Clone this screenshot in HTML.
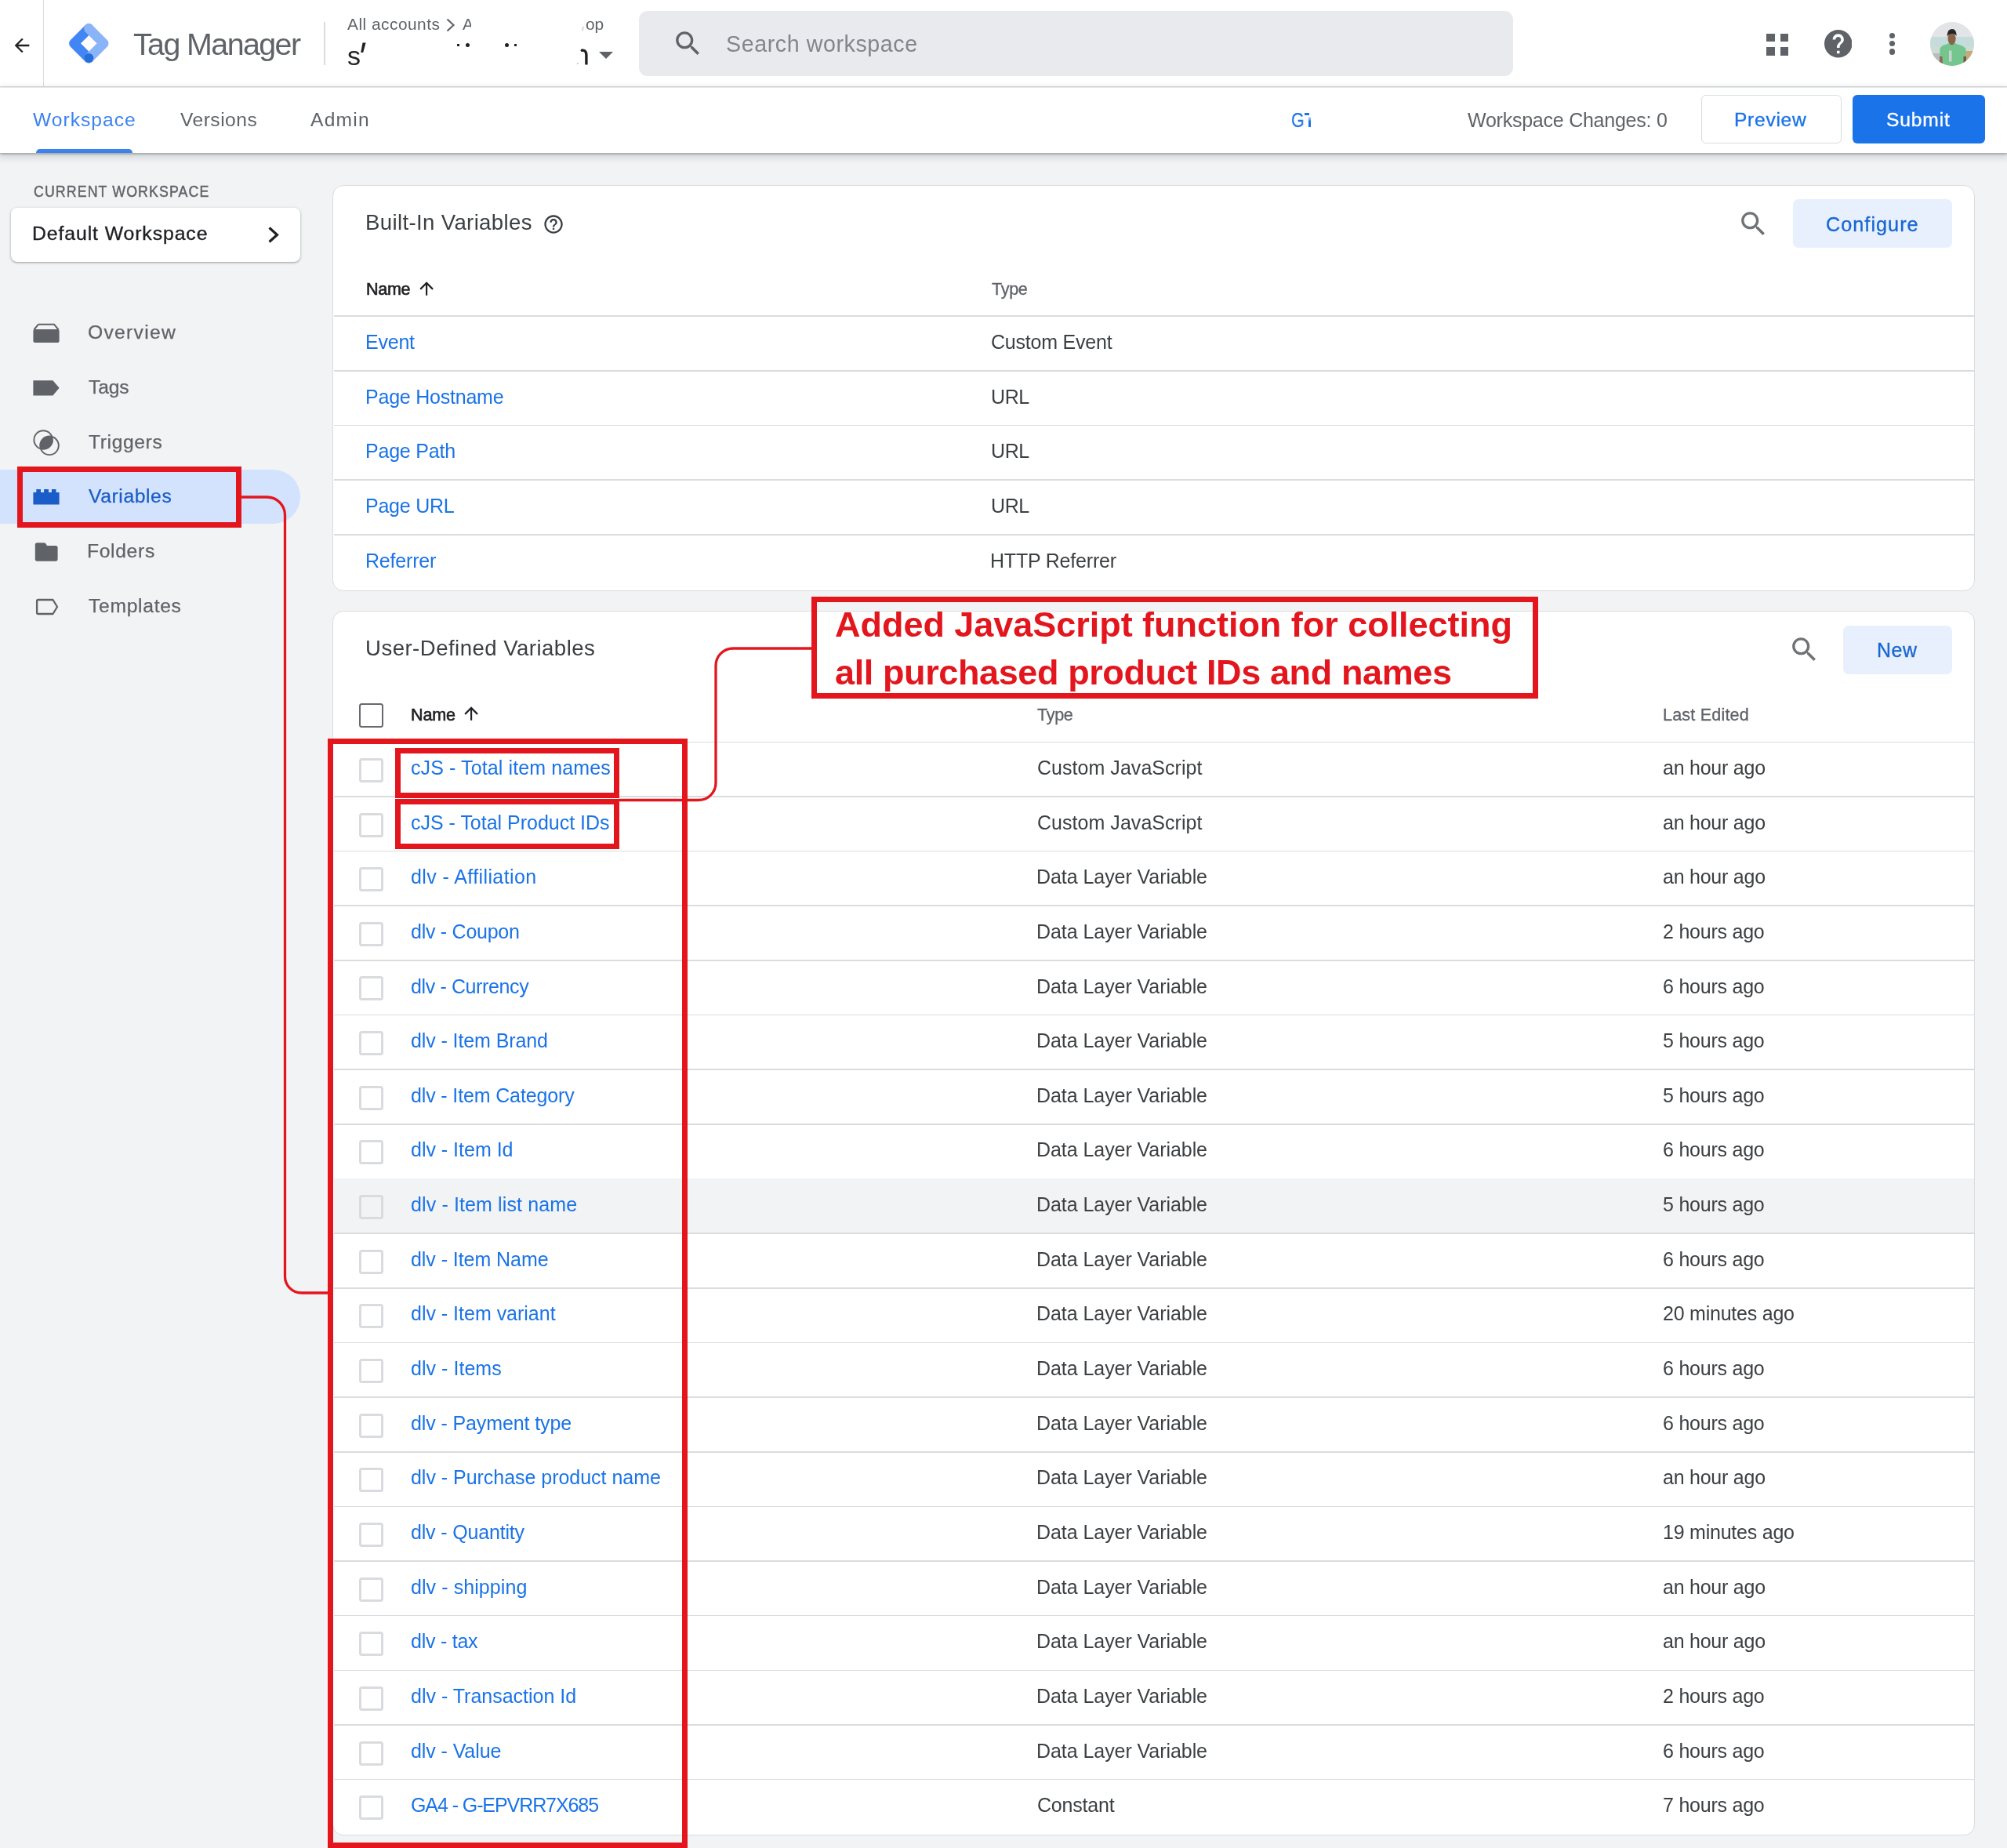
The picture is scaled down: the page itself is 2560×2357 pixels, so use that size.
<!DOCTYPE html>
<html><head><meta charset="utf-8">
<style>
html,body{margin:0;padding:0;}
body{width:2560px;height:2357px;position:relative;overflow:hidden;background:#f1f3f4;font-family:"Liberation Sans",sans-serif;}
.t{position:absolute;white-space:nowrap;will-change:transform;}
</style></head><body>
<div style="position:absolute;left:0.0px;top:0.0px;width:2560.0px;height:110.0px;background:#fff"></div>
<div style="position:absolute;left:0.0px;top:110.0px;width:2560.0px;height:1.3px;background:#dadce0"></div>
<div style="position:absolute;left:54.5px;top:0.0px;width:1.5px;height:110.0px;background:#dadce0"></div>
<svg style="position:absolute;left:14.0px;top:43.9px;" width="28.0" height="28.0" viewBox="0 0 24 24"><path fill="#202124" d="M20 11H7.83l5.59-5.59L12 4l-8 8 8 8 1.41-1.41L7.83 13H20v-2z"/></svg>
<svg style="position:absolute;left:80.0px;top:20.0px;" width="70.0" height="70.0" viewBox="80 20 70 70"><path d="M113.3 36.3 L94.3 55.3 L113.3 74.3" fill="none" stroke="#4285f4" stroke-width="12.4" stroke-linecap="round" stroke-linejoin="round"/><path d="M113.3 36.3 L132.3 55.3 L113.3 74.3" fill="none" stroke="#8ab4f8" stroke-width="12.4" stroke-linecap="round" stroke-linejoin="round"/><circle cx="113.3" cy="74.0" r="6.1000000000000005" fill="#246fdb"/></svg>
<div class="t" style="left:169.8px;top:36.6px;font-size:39.4px;line-height:39.4px;color:#5f6368;font-weight:400;letter-spacing:-1.59px;">Tag Manager</div>
<div style="position:absolute;left:413.0px;top:28.0px;width:1.5px;height:55.0px;background:#dadce0"></div>
<div class="t" style="left:442.5px;top:21.4px;font-size:20.9px;line-height:20.9px;color:#5f6368;font-weight:400;letter-spacing:0.48px;">All accounts</div>
<svg style="position:absolute;left:566.0px;top:22.0px;" width="18.0" height="20.0" viewBox="0 0 18 20"><path d="M4.5 2.5 L12.5 10 L4.5 17.5" fill="none" stroke="#5f6368" stroke-width="2.2"/></svg>
<div class="t" style="left:589.5px;top:21.4px;font-size:20.9px;line-height:20.9px;color:#5f6368;font-weight:400;letter-spacing:0.00px;">A</div>
<div style="position:absolute;left:601.0px;top:18.0px;width:140.0px;height:26.0px;background:#fff"></div>
<div class="t" style="left:747.0px;top:21.4px;font-size:20.9px;line-height:20.9px;color:#5f6368;font-weight:400;letter-spacing:-0.02px;">op</div>
<div style="position:absolute;left:743.3px;top:33.5px;width:0.9px;height:5.0px;background:#aaa;transform:skewX(-15deg)"></div>
<div class="t" style="left:442.5px;top:53.9px;font-size:34px;line-height:34px;color:#202124;font-weight:400;letter-spacing:0.00px;">s</div>
<svg style="position:absolute;left:458.0px;top:54.0px;" width="10.0" height="14.0" viewBox="0 0 10 14"><path d="M4.5 0.5 H8.6 L5.2 13 H2.2z" fill="#202124"/></svg>
<div style="position:absolute;left:583.0px;top:56.0px;width:3.0px;height:2.5px;background:#202124"></div>
<div style="position:absolute;left:594.0px;top:55.0px;width:5.0px;height:5.0px;background:#202124;border-radius:50%"></div>
<div style="position:absolute;left:644.0px;top:55.0px;width:5.0px;height:5.0px;background:#202124;border-radius:50%"></div>
<div style="position:absolute;left:656.0px;top:56.0px;width:3.0px;height:2.5px;background:#202124"></div>
<svg style="position:absolute;left:734.0px;top:60.0px;" width="18.0" height="24.0" viewBox="734 60 18 24"><path d="M742.2 64.2 Q747.9 63.6 747.9 70.5 V82.6" fill="none" stroke="#202124" stroke-width="3.4" stroke-linecap="butt"/><circle cx="742.3" cy="64.3" r="1.7" fill="#202124"/><path d="M736 82 L737.5 80.2" stroke="#999" stroke-width="1"/></svg>
<svg style="position:absolute;left:764.0px;top:66.0px;" width="18.0" height="9.0" viewBox="0 0 18 9"><path d="M0 0 L18 0 L9 9z" fill="#5f6368"/></svg>
<div style="position:absolute;left:815.0px;top:13.7px;width:1115.0px;height:83.5px;background:#e9eaed;border-radius:11px"></div>
<svg style="position:absolute;left:856.8px;top:35.2px;" width="41.0" height="41.0" viewBox="0 0 24 24"><path fill="#5f6368" d="M15.5 14h-.79l-.28-.27C15.41 12.59 16 11.11 16 9.5 16 5.91 13.09 3 9.5 3S3 5.91 3 9.5 5.91 16 9.5 16c1.61 0 3.090-.59 4.23-1.57l.27.28v.79l5 4.99L20.49 19l-4.99-5zm-6 0C7.01 14 5 11.99 5 9.5S7.01 5 9.5 5 14 7.01 14 9.5 11.99 14 9.5 14z"/></svg>
<div class="t" style="left:926.0px;top:41.7px;font-size:28.6px;line-height:28.6px;color:#80868b;font-weight:400;letter-spacing:0.59px;">Search workspace</div>
<div style="position:absolute;left:2253.4px;top:42.7px;width:10.6px;height:10.5px;background:#5f6368"></div>
<div style="position:absolute;left:2270.8px;top:42.7px;width:10.6px;height:10.5px;background:#5f6368"></div>
<div style="position:absolute;left:2253.4px;top:60.2px;width:10.6px;height:10.5px;background:#5f6368"></div>
<div style="position:absolute;left:2270.8px;top:60.2px;width:10.6px;height:10.5px;background:#5f6368"></div>
<svg style="position:absolute;left:2326.5px;top:38.0px;" width="35.5" height="35.5" viewBox="0 0 24 24"><path fill="#5f6368" d="M12 2C6.48 2 2 6.48 2 12s4.48 10 10 10 10-4.48 10-10S17.52 2 12 2zm1 17h-2v-2h2v2zm2.07-7.75l-.9.92C13.45 12.9 13 13.5 13 15h-2v-.5c0-1.1.45-2.1 1.17-2.83l1.24-1.26c.37-.36.59-.86.59-1.41 0-1.1-.9-2-2-2s-2 .9-2 2H8c0-2.21 1.79-4 4-4s4 1.79 4 4c0 .88-.36 1.68-.93 2.25z" transform="translate(-2.4 -2.4) scale(1.2)"/></svg>
<div style="position:absolute;left:2410.2px;top:41.7px;width:7.2px;height:7.2px;background:#5f6368;border-radius:50%"></div>
<div style="position:absolute;left:2410.2px;top:52.0px;width:7.2px;height:7.2px;background:#5f6368;border-radius:50%"></div>
<div style="position:absolute;left:2410.2px;top:62.4px;width:7.2px;height:7.2px;background:#5f6368;border-radius:50%"></div>
<svg style="position:absolute;left:2462.0px;top:28.0px;" width="56.0" height="56.0" viewBox="0 0 56 56"><defs><clipPath id="av"><circle cx="28" cy="28" r="28"/></clipPath></defs><g clip-path="url(#av)"><rect width="56" height="56" fill="#e3e4e5"/><rect y="19" width="56" height="13" fill="#c6dcdc"/><rect y="32" width="56" height="24" fill="#cfdcd2"/><rect x="45" y="37" width="11" height="19" fill="#c9a97a"/><rect x="2" y="40" width="10" height="16" fill="#b9bcbd"/><path d="M11.5 58 L12.5 34 Q14 30 20 28.8 L24 27 Q27.6 29.5 31.5 27 L35.5 28.8 Q42 30 45.5 34 L46.5 58z" fill="#74c68e"/><path d="M12 44 L15.5 44 L16 56 L12 56z" fill="#8f6a4e"/><path d="M42.5 44 L46 44 L46 56 L42.5 56z" fill="#6e5a48"/><rect x="24" y="36.5" width="3.5" height="14" fill="#c9d2cc"/><ellipse cx="27.6" cy="21.5" rx="5" ry="7.8" fill="#8a6248"/><path d="M21.8 19 Q21.3 9 27.8 9 Q34 9 33.6 18.5 Q32.5 15 28 15 Q23.5 15 21.8 19z" fill="#262626"/></g></svg>
<div style="position:absolute;left:0.0px;top:111.5px;width:2560.0px;height:83.5px;background:#fff;box-shadow:0 1.5px 2px rgba(60,64,67,.28),0 3px 9px 2px rgba(60,64,67,.2)"></div>
<div class="t" style="left:42.3px;top:141.0px;font-size:24.6px;line-height:24.6px;color:#3b82f0;font-weight:400;letter-spacing:1.01px;">Workspace</div>
<div style="position:absolute;left:45.7px;top:189.6px;width:123.0px;height:5.4px;background:#3b82ee;border-radius:5px 5px 0 0"></div>
<div class="t" style="left:229.6px;top:141.0px;font-size:24.6px;line-height:24.6px;color:#5f6368;font-weight:400;letter-spacing:0.48px;">Versions</div>
<div class="t" style="left:395.5px;top:141.0px;font-size:24.6px;line-height:24.6px;color:#5f6368;font-weight:400;letter-spacing:1.24px;">Admin</div>
<div class="t" style="left:1646.7px;top:139.9px;font-size:26.4px;line-height:26.4px;color:#1a73e8;font-weight:400;letter-spacing:0.00px;-webkit-text-stroke:0.25px #1a73e8;transform:scaleX(0.81);transform-origin:0 0">G</div>
<div style="position:absolute;left:1664.0px;top:144.4px;width:6.0px;height:2.3px;background:#1a73e8"></div>
<div style="position:absolute;left:1669.3px;top:149.0px;width:2.9px;height:13.2px;background:linear-gradient(#d6e6fb,#1a73e8 45%)"></div>
<div class="t" style="left:1871.9px;top:140.9px;font-size:25px;line-height:25px;color:#5f6368;font-weight:400;letter-spacing:-0.24px;">Workspace Changes: 0</div>
<div style="position:absolute;left:2170.0px;top:121.0px;width:179.0px;height:62.0px;background:#fff;border:1.5px solid #dadce0;border-radius:6px;box-sizing:border-box"></div>
<div class="t" style="left:2212.4px;top:141.1px;font-size:24.6px;line-height:24.6px;color:#1a73e8;font-weight:400;letter-spacing:0.71px;-webkit-text-stroke:0.35px #1a73e8">Preview</div>
<div style="position:absolute;left:2363.0px;top:121.0px;width:169.0px;height:62.0px;background:#1a73e8;border-radius:6px"></div>
<div class="t" style="left:2406.2px;top:141.1px;font-size:24.6px;line-height:24.6px;color:#fff;font-weight:400;letter-spacing:0.86px;-webkit-text-stroke:0.35px #fff">Submit</div>
<div class="t" style="left:42.6px;top:236.9px;font-size:17.8px;line-height:17.8px;color:#5f6368;font-weight:400;letter-spacing:1.09px;-webkit-text-stroke:0.4px #5f6368;transform:scaleY(1.1);transform-origin:0 85%">CURRENT WORKSPACE</div>
<div style="position:absolute;left:14.0px;top:264.8px;width:369.0px;height:69.5px;background:#fff;border-radius:8px;box-shadow:0 1px 2px rgba(60,64,67,.3),0 1px 3px 1px rgba(60,64,67,.15)"></div>
<div class="t" style="left:40.6px;top:286.2px;font-size:24.8px;line-height:24.8px;color:#202124;font-weight:400;letter-spacing:0.90px;-webkit-text-stroke:0.35px #202124">Default Workspace</div>
<svg style="position:absolute;left:338.0px;top:287.0px;" width="22.0" height="25.0" viewBox="0 0 22 25"><path d="M5.5 3.5 L15.5 12.5 L5.5 21.5" fill="none" stroke="#202124" stroke-width="3.2"/></svg>
<div style="position:absolute;left:0.0px;top:599.0px;width:383.0px;height:69.0px;background:#d3e3fd;border-radius:0 34.5px 34.5px 0"></div>
<div class="t" style="left:111.5px;top:412.4px;font-size:24.7px;line-height:24.7px;color:#5f6368;font-weight:400;letter-spacing:1.28px;-webkit-text-stroke:0.25px #5f6368">Overview</div>
<div class="t" style="left:112.5px;top:482.0px;font-size:24.7px;line-height:24.7px;color:#5f6368;font-weight:400;letter-spacing:-0.20px;-webkit-text-stroke:0.25px #5f6368">Tags</div>
<div class="t" style="left:112.5px;top:551.7px;font-size:24.7px;line-height:24.7px;color:#5f6368;font-weight:400;letter-spacing:0.59px;-webkit-text-stroke:0.25px #5f6368">Triggers</div>
<div class="t" style="left:112.5px;top:621.4px;font-size:24.7px;line-height:24.7px;color:#1a5cc8;font-weight:400;letter-spacing:0.58px;-webkit-text-stroke:0.25px #1a5cc8">Variables</div>
<div class="t" style="left:110.5px;top:691.1px;font-size:24.7px;line-height:24.7px;color:#5f6368;font-weight:400;letter-spacing:0.65px;-webkit-text-stroke:0.25px #5f6368">Folders</div>
<div class="t" style="left:112.5px;top:760.8px;font-size:24.7px;line-height:24.7px;color:#5f6368;font-weight:400;letter-spacing:0.68px;-webkit-text-stroke:0.25px #5f6368">Templates</div>
<svg style="position:absolute;left:42.0px;top:412.0px;" width="34.0" height="26.0" viewBox="0 0 34 26"><path d="M7 1.7 L27 1.7 L32.6 8.5" fill="none" stroke="#5f6368" stroke-width="2"/><path d="M7 1.7 L1.4 8.5" fill="none" stroke="#5f6368" stroke-width="2"/><rect x="0.4" y="8" width="33.2" height="17" rx="2" fill="#5f6368"/></svg>
<svg style="position:absolute;left:42.0px;top:485.0px;" width="34.0" height="20.0" viewBox="0 0 34 20"><path d="M0.4 0.2 L25.4 0.2 L33.6 9.8 L25.4 19.4 L0.4 19.4z" fill="#5f6368"/></svg>
<svg style="position:absolute;left:42.0px;top:547.0px;" width="35.0" height="35.0" viewBox="42 547 35 35"><circle cx="55.2" cy="561" r="11.8" fill="none" stroke="#5f6368" stroke-width="1.9"/><circle cx="63" cy="568.3" r="11.8" fill="none" stroke="#5f6368" stroke-width="1.9"/><clipPath id="c1"><circle cx="55.2" cy="561" r="11.8"/></clipPath><circle cx="63" cy="568.3" r="11.8" fill="#5f6368" clip-path="url(#c1)"/></svg>
<svg style="position:absolute;left:42.0px;top:623.0px;" width="34.0" height="21.0" viewBox="0 0 34 21"><path d="M0.4 5 H4.3 V0.9 H10 V5 H14.1 V0.9 H20 V5 H23.9 V0.9 H29.5 V5 H33.6 V20.4 H0.4z" fill="#1a5cc8"/></svg>
<svg style="position:absolute;left:44.0px;top:692.0px;" width="30.0" height="24.0" viewBox="0 0 30 24"><path d="M3.3 0.3 H12 Q13.5 0.3 14.3 1.3 L16 4 H27 Q29.6 4 29.6 6.5 V21 Q29.6 23.8 27 23.8 H3.3 Q0.8 23.8 0.8 21 V3 Q0.8 0.3 3.3 0.3z" fill="#5f6368"/></svg>
<svg style="position:absolute;left:45.0px;top:763.0px;" width="30.0" height="22.0" viewBox="0 0 30 22"><path d="M3.5 2 H22.5 L28 11 L22.5 20 H3.5 Q2.1 20 2.1 18.6 V3.4 Q2.1 2 3.5 2z" fill="none" stroke="#5f6368" stroke-width="2.3" stroke-linejoin="round"/></svg>
<div style="position:absolute;left:424.0px;top:236.0px;width:2095.0px;height:518.0px;background:#fff;border:1.5px solid #dadce0;border-radius:14px;box-sizing:border-box"></div>
<div class="t" style="left:465.8px;top:270.1px;font-size:27.6px;line-height:27.6px;color:#3c4043;font-weight:400;letter-spacing:0.35px;">Built-In Variables</div>
<svg style="position:absolute;left:691.5px;top:272.2px;" width="28.1" height="28.1" viewBox="0 0 24 24"><path fill="#3c4043" d="M11 18h2v-2h-2v2zm1-16C6.48 2 2 6.48 2 12s4.48 10 10 10 10-4.48 10-10S17.52 2 12 2zm0 18c-4.41 0-8-3.59-8-8s3.59-8 8-8 8 3.59 8 8-3.59 8-8 8zm0-14c-2.21 0-4 1.79-4 4h2c0-1.1.9-2 2-2s2 .9 2 2c0 2-3 1.75-3 5h2c0-2.25 3-2.5 3-5 0-2.21-1.79-4-4-4z"/></svg>
<svg style="position:absolute;left:2216.4px;top:264.9px;" width="41.0" height="41.0" viewBox="0 0 24 24"><path fill="#6f7378" d="M15.5 14h-.79l-.28-.27C15.41 12.59 16 11.11 16 9.5 16 5.91 13.09 3 9.5 3S3 5.91 3 9.5 5.91 16 9.5 16c1.61 0 3.09-.59 4.23-1.57l.27.28v.79l5 4.99L20.49 19l-4.99-5zm-6 0C7.01 14 5 11.99 5 9.5S7.01 5 9.5 5 14 7.01 14 9.5 11.99 14 9.5 14z"/></svg>
<div style="position:absolute;left:2287.0px;top:254.0px;width:203.0px;height:62.0px;background:#e8f0fe;border-radius:7px"></div>
<div class="t" style="left:2329.0px;top:273.6px;font-size:25.2px;line-height:25.2px;color:#1967d2;font-weight:400;letter-spacing:1.05px;-webkit-text-stroke:0.35px #1967d2">Configure</div>
<div class="t" style="left:466.8px;top:358.0px;font-size:21.6px;line-height:21.6px;color:#202124;font-weight:400;letter-spacing:-0.33px;-webkit-text-stroke:0.6px #202124">Name</div>
<svg style="position:absolute;left:530.8px;top:354.6px;" width="26.2" height="26.2" viewBox="0 0 24 24"><path fill="#202124" d="M4 12l1.41 1.41L11 7.83V20h2V7.83l5.58 5.59L20 12l-8-8-8 8z"/></svg>
<div class="t" style="left:1264.5px;top:358.2px;font-size:21.6px;line-height:21.6px;color:#5f6368;font-weight:400;letter-spacing:-0.33px;-webkit-text-stroke:0.3px #5f6368">Type</div>
<div style="position:absolute;left:425.5px;top:402.2px;width:2092.0px;height:1.7px;background:#dadce0"></div>
<div class="t" style="left:465.8px;top:423.9px;font-size:25px;line-height:25px;color:#1a73e8;font-weight:400;letter-spacing:-0.23px;">Event</div>
<div class="t" style="left:1263.5px;top:423.9px;font-size:25px;line-height:25px;color:#3c4043;font-weight:400;letter-spacing:-0.21px;">Custom Event</div>
<div style="position:absolute;left:425.5px;top:471.9px;width:2092.0px;height:1.7px;background:#dadce0"></div>
<div class="t" style="left:465.8px;top:493.5px;font-size:25px;line-height:25px;color:#1a73e8;font-weight:400;letter-spacing:-0.22px;">Page Hostname</div>
<div class="t" style="left:1263.5px;top:493.5px;font-size:25px;line-height:25px;color:#3c4043;font-weight:400;letter-spacing:-0.37px;">URL</div>
<div style="position:absolute;left:425.5px;top:541.6px;width:2092.0px;height:1.7px;background:#dadce0"></div>
<div class="t" style="left:465.8px;top:563.2px;font-size:25px;line-height:25px;color:#1a73e8;font-weight:400;letter-spacing:-0.21px;">Page Path</div>
<div class="t" style="left:1263.5px;top:563.2px;font-size:25px;line-height:25px;color:#3c4043;font-weight:400;letter-spacing:-0.37px;">URL</div>
<div style="position:absolute;left:425.5px;top:611.3px;width:2092.0px;height:1.7px;background:#dadce0"></div>
<div class="t" style="left:465.8px;top:633.0px;font-size:25px;line-height:25px;color:#1a73e8;font-weight:400;letter-spacing:-0.24px;">Page URL</div>
<div class="t" style="left:1263.5px;top:633.0px;font-size:25px;line-height:25px;color:#3c4043;font-weight:400;letter-spacing:-0.37px;">URL</div>
<div style="position:absolute;left:425.5px;top:681.0px;width:2092.0px;height:1.7px;background:#dadce0"></div>
<div class="t" style="left:465.8px;top:702.6px;font-size:25px;line-height:25px;color:#1a73e8;font-weight:400;letter-spacing:-0.19px;">Referrer</div>
<div class="t" style="left:1262.5px;top:702.6px;font-size:25px;line-height:25px;color:#3c4043;font-weight:400;letter-spacing:-0.20px;">HTTP Referrer</div>
<div style="position:absolute;left:424.0px;top:779.0px;width:2095.0px;height:1562.0px;background:#fff;border:1.5px solid #dadce0;border-radius:14px;box-sizing:border-box"></div>
<div class="t" style="left:465.9px;top:813.3px;font-size:27.6px;line-height:27.6px;color:#3c4043;font-weight:400;letter-spacing:0.46px;">User-Defined Variables</div>
<svg style="position:absolute;left:2280.9px;top:807.9px;" width="41.0" height="41.0" viewBox="0 0 24 24"><path fill="#6f7378" d="M15.5 14h-.79l-.28-.27C15.41 12.59 16 11.11 16 9.5 16 5.91 13.09 3 9.5 3S3 5.91 3 9.5 5.91 16 9.5 16c1.61 0 3.09-.59 4.23-1.57l.27.28v.79l5 4.99L20.49 19l-4.99-5zm-6 0C7.01 14 5 11.99 5 9.5S7.01 5 9.5 5 14 7.01 14 9.5 11.99 14 9.5 14z"/></svg>
<div style="position:absolute;left:2351.0px;top:798.0px;width:139.0px;height:62.0px;background:#e8f0fe;border-radius:7px"></div>
<div class="t" style="left:2393.7px;top:817.4px;font-size:24.9px;line-height:24.9px;color:#1967d2;font-weight:400;letter-spacing:0.54px;-webkit-text-stroke:0.35px #1967d2">New</div>
<div style="position:absolute;left:458.2px;top:896.9px;width:31.0px;height:31.0px;border:2.8px solid #66696d;border-radius:3.5px;box-sizing:border-box"></div>
<div class="t" style="left:524.0px;top:901.2px;font-size:21.6px;line-height:21.6px;color:#202124;font-weight:400;letter-spacing:-0.20px;-webkit-text-stroke:0.6px #202124">Name</div>
<svg style="position:absolute;left:588.1px;top:897.2px;" width="26.2" height="26.2" viewBox="0 0 24 24"><path fill="#202124" d="M4 12l1.41 1.41L11 7.83V20h2V7.83l5.58 5.59L20 12l-8-8-8 8z"/></svg>
<div class="t" style="left:1323.0px;top:900.9px;font-size:21.6px;line-height:21.6px;color:#5f6368;font-weight:400;letter-spacing:-0.33px;-webkit-text-stroke:0.3px #5f6368">Type</div>
<div class="t" style="left:2120.8px;top:900.9px;font-size:21.6px;line-height:21.6px;color:#5f6368;font-weight:400;letter-spacing:0.17px;-webkit-text-stroke:0.3px #5f6368">Last Edited</div>
<div style="position:absolute;left:425.5px;top:945.5px;width:2092.0px;height:1.7px;background:#dadce0"></div>
<div style="position:absolute;left:458.2px;top:966.8px;width:31.0px;height:31.0px;border:3.2px solid #d9dbde;border-radius:3.5px;box-sizing:border-box"></div>
<div class="t" style="left:523.6px;top:966.9px;font-size:25px;line-height:25px;color:#1a73e8;font-weight:400;letter-spacing:0.11px;">cJS - Total item names</div>
<div class="t" style="left:1322.5px;top:966.9px;font-size:25px;line-height:25px;color:#3c4043;font-weight:400;letter-spacing:0.04px;">Custom JavaScript</div>
<div class="t" style="left:2120.8px;top:966.9px;font-size:25px;line-height:25px;color:#3c4043;font-weight:400;letter-spacing:-0.24px;">an hour ago</div>
<div style="position:absolute;left:425.5px;top:1015.1px;width:2092.0px;height:1.7px;background:#dadce0"></div>
<div style="position:absolute;left:458.2px;top:1036.5px;width:31.0px;height:31.0px;border:3.2px solid #d9dbde;border-radius:3.5px;box-sizing:border-box"></div>
<div class="t" style="left:523.6px;top:1036.5px;font-size:25px;line-height:25px;color:#1a73e8;font-weight:400;letter-spacing:-0.01px;">cJS - Total Product IDs</div>
<div class="t" style="left:1322.5px;top:1036.5px;font-size:25px;line-height:25px;color:#3c4043;font-weight:400;letter-spacing:0.04px;">Custom JavaScript</div>
<div class="t" style="left:2120.8px;top:1036.5px;font-size:25px;line-height:25px;color:#3c4043;font-weight:400;letter-spacing:-0.24px;">an hour ago</div>
<div style="position:absolute;left:425.5px;top:1084.8px;width:2092.0px;height:1.7px;background:#dadce0"></div>
<div style="position:absolute;left:458.2px;top:1106.1px;width:31.0px;height:31.0px;border:3.2px solid #d9dbde;border-radius:3.5px;box-sizing:border-box"></div>
<div class="t" style="left:523.6px;top:1106.2px;font-size:25px;line-height:25px;color:#1a73e8;font-weight:400;letter-spacing:0.40px;">dlv - Affiliation</div>
<div class="t" style="left:1321.5px;top:1106.2px;font-size:25px;line-height:25px;color:#3c4043;font-weight:400;letter-spacing:-0.06px;">Data Layer Variable</div>
<div class="t" style="left:2120.8px;top:1106.2px;font-size:25px;line-height:25px;color:#3c4043;font-weight:400;letter-spacing:-0.24px;">an hour ago</div>
<div style="position:absolute;left:425.5px;top:1154.4px;width:2092.0px;height:1.7px;background:#dadce0"></div>
<div style="position:absolute;left:458.2px;top:1175.8px;width:31.0px;height:31.0px;border:3.2px solid #d9dbde;border-radius:3.5px;box-sizing:border-box"></div>
<div class="t" style="left:523.6px;top:1175.8px;font-size:25px;line-height:25px;color:#1a73e8;font-weight:400;letter-spacing:-0.26px;">dlv - Coupon</div>
<div class="t" style="left:1321.5px;top:1175.8px;font-size:25px;line-height:25px;color:#3c4043;font-weight:400;letter-spacing:-0.06px;">Data Layer Variable</div>
<div class="t" style="left:2120.8px;top:1175.8px;font-size:25px;line-height:25px;color:#3c4043;font-weight:400;letter-spacing:-0.23px;">2 hours ago</div>
<div style="position:absolute;left:425.5px;top:1224.1px;width:2092.0px;height:1.7px;background:#dadce0"></div>
<div style="position:absolute;left:458.2px;top:1245.4px;width:31.0px;height:31.0px;border:3.2px solid #d9dbde;border-radius:3.5px;box-sizing:border-box"></div>
<div class="t" style="left:523.6px;top:1245.5px;font-size:25px;line-height:25px;color:#1a73e8;font-weight:400;letter-spacing:-0.38px;">dlv - Currency</div>
<div class="t" style="left:1321.5px;top:1245.5px;font-size:25px;line-height:25px;color:#3c4043;font-weight:400;letter-spacing:-0.06px;">Data Layer Variable</div>
<div class="t" style="left:2120.8px;top:1245.5px;font-size:25px;line-height:25px;color:#3c4043;font-weight:400;letter-spacing:-0.23px;">6 hours ago</div>
<div style="position:absolute;left:425.5px;top:1293.7px;width:2092.0px;height:1.7px;background:#dadce0"></div>
<div style="position:absolute;left:458.2px;top:1315.0px;width:31.0px;height:31.0px;border:3.2px solid #d9dbde;border-radius:3.5px;box-sizing:border-box"></div>
<div class="t" style="left:523.6px;top:1315.1px;font-size:25px;line-height:25px;color:#1a73e8;font-weight:400;letter-spacing:-0.10px;">dlv - Item Brand</div>
<div class="t" style="left:1321.5px;top:1315.1px;font-size:25px;line-height:25px;color:#3c4043;font-weight:400;letter-spacing:-0.06px;">Data Layer Variable</div>
<div class="t" style="left:2120.8px;top:1315.1px;font-size:25px;line-height:25px;color:#3c4043;font-weight:400;letter-spacing:-0.23px;">5 hours ago</div>
<div style="position:absolute;left:425.5px;top:1363.4px;width:2092.0px;height:1.7px;background:#dadce0"></div>
<div style="position:absolute;left:458.2px;top:1384.7px;width:31.0px;height:31.0px;border:3.2px solid #d9dbde;border-radius:3.5px;box-sizing:border-box"></div>
<div class="t" style="left:523.6px;top:1384.8px;font-size:25px;line-height:25px;color:#1a73e8;font-weight:400;letter-spacing:-0.14px;">dlv - Item Category</div>
<div class="t" style="left:1321.5px;top:1384.8px;font-size:25px;line-height:25px;color:#3c4043;font-weight:400;letter-spacing:-0.06px;">Data Layer Variable</div>
<div class="t" style="left:2120.8px;top:1384.8px;font-size:25px;line-height:25px;color:#3c4043;font-weight:400;letter-spacing:-0.23px;">5 hours ago</div>
<div style="position:absolute;left:425.5px;top:1433.0px;width:2092.0px;height:1.7px;background:#dadce0"></div>
<div style="position:absolute;left:458.2px;top:1454.3px;width:31.0px;height:31.0px;border:3.2px solid #d9dbde;border-radius:3.5px;box-sizing:border-box"></div>
<div class="t" style="left:523.6px;top:1454.4px;font-size:25px;line-height:25px;color:#1a73e8;font-weight:400;letter-spacing:-0.01px;">dlv - Item Id</div>
<div class="t" style="left:1321.5px;top:1454.4px;font-size:25px;line-height:25px;color:#3c4043;font-weight:400;letter-spacing:-0.06px;">Data Layer Variable</div>
<div class="t" style="left:2120.8px;top:1454.4px;font-size:25px;line-height:25px;color:#3c4043;font-weight:400;letter-spacing:-0.23px;">6 hours ago</div>
<div style="position:absolute;left:425.5px;top:1502.7px;width:2092.0px;height:1.7px;background:#dadce0"></div>
<div style="position:absolute;left:425.5px;top:1503.4px;width:2092.0px;height:69.7px;background:#f1f3f4"></div>
<div style="position:absolute;left:458.2px;top:1524.0px;width:31.0px;height:31.0px;border:3.2px solid #d9dbde;border-radius:3.5px;box-sizing:border-box"></div>
<div class="t" style="left:523.6px;top:1524.1px;font-size:25px;line-height:25px;color:#1a73e8;font-weight:400;letter-spacing:0.12px;">dlv - Item list name</div>
<div class="t" style="left:1321.5px;top:1524.1px;font-size:25px;line-height:25px;color:#3c4043;font-weight:400;letter-spacing:-0.06px;">Data Layer Variable</div>
<div class="t" style="left:2120.8px;top:1524.1px;font-size:25px;line-height:25px;color:#3c4043;font-weight:400;letter-spacing:-0.23px;">5 hours ago</div>
<div style="position:absolute;left:425.5px;top:1572.3px;width:2092.0px;height:1.7px;background:#dadce0"></div>
<div style="position:absolute;left:458.2px;top:1593.7px;width:31.0px;height:31.0px;border:3.2px solid #d9dbde;border-radius:3.5px;box-sizing:border-box"></div>
<div class="t" style="left:523.6px;top:1593.7px;font-size:25px;line-height:25px;color:#1a73e8;font-weight:400;letter-spacing:-0.06px;">dlv - Item Name</div>
<div class="t" style="left:1321.5px;top:1593.7px;font-size:25px;line-height:25px;color:#3c4043;font-weight:400;letter-spacing:-0.06px;">Data Layer Variable</div>
<div class="t" style="left:2120.8px;top:1593.7px;font-size:25px;line-height:25px;color:#3c4043;font-weight:400;letter-spacing:-0.23px;">6 hours ago</div>
<div style="position:absolute;left:425.5px;top:1642.0px;width:2092.0px;height:1.7px;background:#dadce0"></div>
<div style="position:absolute;left:458.2px;top:1663.3px;width:31.0px;height:31.0px;border:3.2px solid #d9dbde;border-radius:3.5px;box-sizing:border-box"></div>
<div class="t" style="left:523.6px;top:1663.4px;font-size:25px;line-height:25px;color:#1a73e8;font-weight:400;letter-spacing:-0.01px;">dlv - Item variant</div>
<div class="t" style="left:1321.5px;top:1663.4px;font-size:25px;line-height:25px;color:#3c4043;font-weight:400;letter-spacing:-0.06px;">Data Layer Variable</div>
<div class="t" style="left:2120.8px;top:1663.4px;font-size:25px;line-height:25px;color:#3c4043;font-weight:400;letter-spacing:-0.23px;">20 minutes ago</div>
<div style="position:absolute;left:425.5px;top:1711.6px;width:2092.0px;height:1.7px;background:#dadce0"></div>
<div style="position:absolute;left:458.2px;top:1733.0px;width:31.0px;height:31.0px;border:3.2px solid #d9dbde;border-radius:3.5px;box-sizing:border-box"></div>
<div class="t" style="left:523.6px;top:1733.0px;font-size:25px;line-height:25px;color:#1a73e8;font-weight:400;letter-spacing:0.04px;">dlv - Items</div>
<div class="t" style="left:1321.5px;top:1733.0px;font-size:25px;line-height:25px;color:#3c4043;font-weight:400;letter-spacing:-0.06px;">Data Layer Variable</div>
<div class="t" style="left:2120.8px;top:1733.0px;font-size:25px;line-height:25px;color:#3c4043;font-weight:400;letter-spacing:-0.23px;">6 hours ago</div>
<div style="position:absolute;left:425.5px;top:1781.3px;width:2092.0px;height:1.7px;background:#dadce0"></div>
<div style="position:absolute;left:458.2px;top:1802.6px;width:31.0px;height:31.0px;border:3.2px solid #d9dbde;border-radius:3.5px;box-sizing:border-box"></div>
<div class="t" style="left:523.6px;top:1802.7px;font-size:25px;line-height:25px;color:#1a73e8;font-weight:400;letter-spacing:-0.11px;">dlv - Payment type</div>
<div class="t" style="left:1321.5px;top:1802.7px;font-size:25px;line-height:25px;color:#3c4043;font-weight:400;letter-spacing:-0.06px;">Data Layer Variable</div>
<div class="t" style="left:2120.8px;top:1802.7px;font-size:25px;line-height:25px;color:#3c4043;font-weight:400;letter-spacing:-0.23px;">6 hours ago</div>
<div style="position:absolute;left:425.5px;top:1850.9px;width:2092.0px;height:1.7px;background:#dadce0"></div>
<div style="position:absolute;left:458.2px;top:1872.2px;width:31.0px;height:31.0px;border:3.2px solid #d9dbde;border-radius:3.5px;box-sizing:border-box"></div>
<div class="t" style="left:523.6px;top:1872.3px;font-size:25px;line-height:25px;color:#1a73e8;font-weight:400;letter-spacing:-0.03px;">dlv - Purchase product name</div>
<div class="t" style="left:1321.5px;top:1872.3px;font-size:25px;line-height:25px;color:#3c4043;font-weight:400;letter-spacing:-0.06px;">Data Layer Variable</div>
<div class="t" style="left:2120.8px;top:1872.3px;font-size:25px;line-height:25px;color:#3c4043;font-weight:400;letter-spacing:-0.24px;">an hour ago</div>
<div style="position:absolute;left:425.5px;top:1920.6px;width:2092.0px;height:1.7px;background:#dadce0"></div>
<div style="position:absolute;left:458.2px;top:1941.9px;width:31.0px;height:31.0px;border:3.2px solid #d9dbde;border-radius:3.5px;box-sizing:border-box"></div>
<div class="t" style="left:523.6px;top:1942.0px;font-size:25px;line-height:25px;color:#1a73e8;font-weight:400;letter-spacing:-0.17px;">dlv - Quantity</div>
<div class="t" style="left:1321.5px;top:1942.0px;font-size:25px;line-height:25px;color:#3c4043;font-weight:400;letter-spacing:-0.06px;">Data Layer Variable</div>
<div class="t" style="left:2120.8px;top:1942.0px;font-size:25px;line-height:25px;color:#3c4043;font-weight:400;letter-spacing:-0.23px;">19 minutes ago</div>
<div style="position:absolute;left:425.5px;top:1990.2px;width:2092.0px;height:1.7px;background:#dadce0"></div>
<div style="position:absolute;left:458.2px;top:2011.5px;width:31.0px;height:31.0px;border:3.2px solid #d9dbde;border-radius:3.5px;box-sizing:border-box"></div>
<div class="t" style="left:523.6px;top:2011.6px;font-size:25px;line-height:25px;color:#1a73e8;font-weight:400;letter-spacing:0.08px;">dlv - shipping</div>
<div class="t" style="left:1321.5px;top:2011.6px;font-size:25px;line-height:25px;color:#3c4043;font-weight:400;letter-spacing:-0.06px;">Data Layer Variable</div>
<div class="t" style="left:2120.8px;top:2011.6px;font-size:25px;line-height:25px;color:#3c4043;font-weight:400;letter-spacing:-0.24px;">an hour ago</div>
<div style="position:absolute;left:425.5px;top:2059.8px;width:2092.0px;height:1.7px;background:#dadce0"></div>
<div style="position:absolute;left:458.2px;top:2081.2px;width:31.0px;height:31.0px;border:3.2px solid #d9dbde;border-radius:3.5px;box-sizing:border-box"></div>
<div class="t" style="left:523.6px;top:2081.3px;font-size:25px;line-height:25px;color:#1a73e8;font-weight:400;letter-spacing:-0.24px;">dlv - tax</div>
<div class="t" style="left:1321.5px;top:2081.3px;font-size:25px;line-height:25px;color:#3c4043;font-weight:400;letter-spacing:-0.06px;">Data Layer Variable</div>
<div class="t" style="left:2120.8px;top:2081.3px;font-size:25px;line-height:25px;color:#3c4043;font-weight:400;letter-spacing:-0.24px;">an hour ago</div>
<div style="position:absolute;left:425.5px;top:2129.5px;width:2092.0px;height:1.7px;background:#dadce0"></div>
<div style="position:absolute;left:458.2px;top:2150.8px;width:31.0px;height:31.0px;border:3.2px solid #d9dbde;border-radius:3.5px;box-sizing:border-box"></div>
<div class="t" style="left:523.6px;top:2150.9px;font-size:25px;line-height:25px;color:#1a73e8;font-weight:400;letter-spacing:-0.00px;">dlv - Transaction Id</div>
<div class="t" style="left:1321.5px;top:2150.9px;font-size:25px;line-height:25px;color:#3c4043;font-weight:400;letter-spacing:-0.06px;">Data Layer Variable</div>
<div class="t" style="left:2120.8px;top:2150.9px;font-size:25px;line-height:25px;color:#3c4043;font-weight:400;letter-spacing:-0.23px;">2 hours ago</div>
<div style="position:absolute;left:425.5px;top:2199.1px;width:2092.0px;height:1.7px;background:#dadce0"></div>
<div style="position:absolute;left:458.2px;top:2220.5px;width:31.0px;height:31.0px;border:3.2px solid #d9dbde;border-radius:3.5px;box-sizing:border-box"></div>
<div class="t" style="left:523.6px;top:2220.6px;font-size:25px;line-height:25px;color:#1a73e8;font-weight:400;letter-spacing:-0.09px;">dlv - Value</div>
<div class="t" style="left:1321.5px;top:2220.6px;font-size:25px;line-height:25px;color:#3c4043;font-weight:400;letter-spacing:-0.06px;">Data Layer Variable</div>
<div class="t" style="left:2120.8px;top:2220.6px;font-size:25px;line-height:25px;color:#3c4043;font-weight:400;letter-spacing:-0.23px;">6 hours ago</div>
<div style="position:absolute;left:425.5px;top:2268.8px;width:2092.0px;height:1.7px;background:#dadce0"></div>
<div style="position:absolute;left:458.2px;top:2290.2px;width:31.0px;height:31.0px;border:3.2px solid #d9dbde;border-radius:3.5px;box-sizing:border-box"></div>
<div class="t" style="left:523.6px;top:2290.2px;font-size:25px;line-height:25px;color:#1a73e8;font-weight:400;letter-spacing:-1.08px;">GA4 - G-EPVRR7X685</div>
<div class="t" style="left:1322.5px;top:2290.2px;font-size:25px;line-height:25px;color:#3c4043;font-weight:400;letter-spacing:-0.21px;">Constant</div>
<div class="t" style="left:2120.8px;top:2290.2px;font-size:25px;line-height:25px;color:#3c4043;font-weight:400;letter-spacing:-0.23px;">7 hours ago</div>
<div style="position:absolute;left:21.5px;top:594.6px;width:286.5px;height:78.4px;border:7px solid #e3161e;box-sizing:border-box"></div>
<div style="position:absolute;left:418.0px;top:942.0px;width:458.7px;height:1415.0px;border:7.2px solid #e3161e;box-sizing:border-box"></div>
<div style="position:absolute;left:504.0px;top:954.0px;width:286.4px;height:64.0px;border:7px solid #e3161e;box-sizing:border-box"></div>
<div style="position:absolute;left:504.0px;top:1019.0px;width:286.4px;height:64.0px;border:7px solid #e3161e;box-sizing:border-box"></div>
<div style="position:absolute;left:1035.0px;top:761.4px;width:926.6px;height:130.1px;border:7px solid #e3161e;box-sizing:border-box"></div>
<div class="t" style="left:1064.7px;top:774.4px;font-size:45px;line-height:45px;color:#e3161e;font-weight:700;letter-spacing:-0.03px;">Added JavaScript function for collecting</div>
<div class="t" style="left:1064.7px;top:834.9px;font-size:45px;line-height:45px;color:#e3161e;font-weight:700;letter-spacing:-0.39px;">all purchased product IDs and names</div>
<svg style="position:absolute;left:0.0px;top:0.0px;pointer-events:none" width="1100.0" height="1700.0" viewBox="0 0 1100 1700"><path d="M308 634 H340.5 A23 23 0 0 1 363.5 657 V1628 A21 21 0 0 0 384.5 1649 H419" fill="none" stroke="#e3161e" stroke-width="3.3"/><path d="M790 1020.5 H891 A22 22 0 0 0 913 998.5 V849 A22 22 0 0 1 935 827 H1036" fill="none" stroke="#e3161e" stroke-width="3.3"/></svg>
</body></html>
